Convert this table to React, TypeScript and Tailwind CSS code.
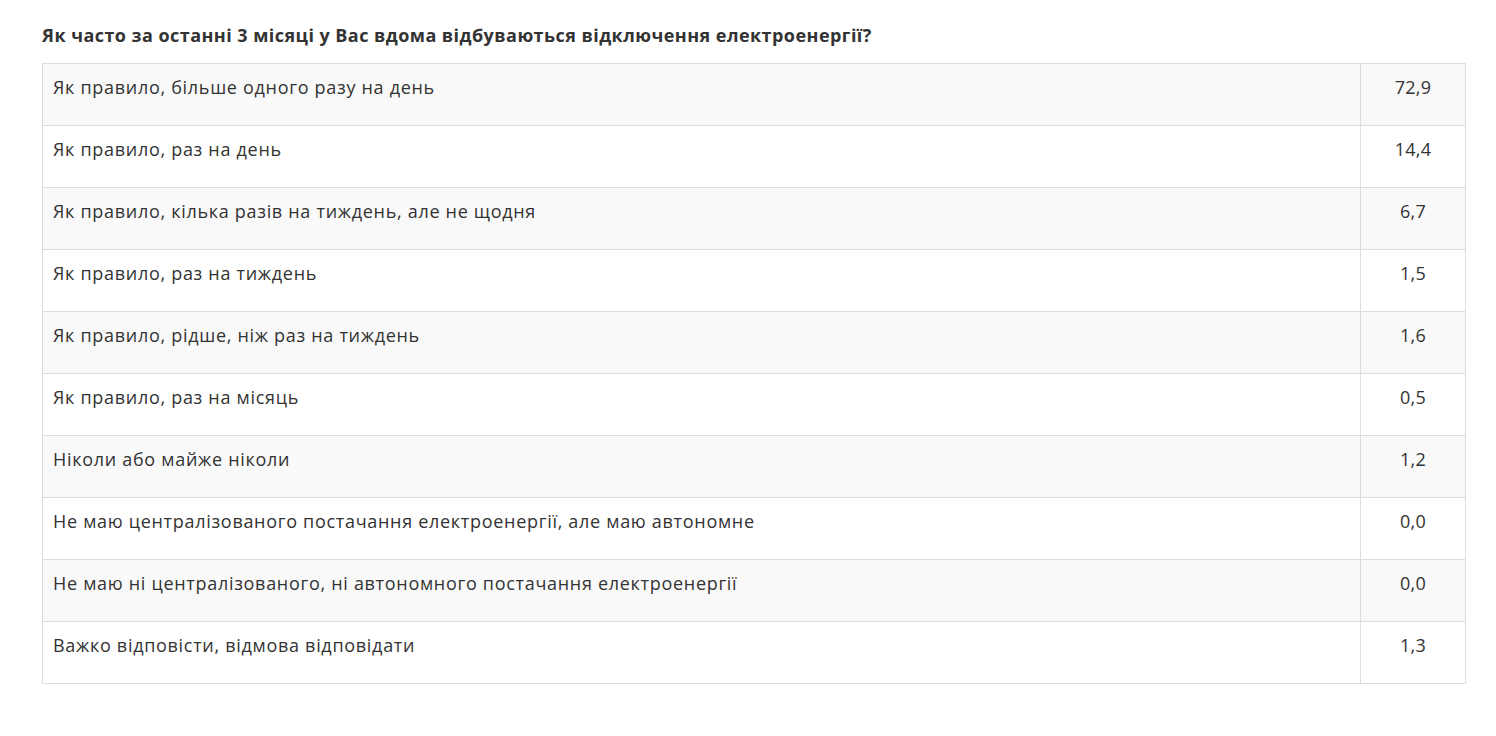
const rows: [string, string][] = [
  ["Як правило, більше одного разу на день", "72,9"],
  ["Як правило, раз на день", "14,4"],
  ["Як правило, кілька разів на тиждень, але не щодня", "6,7"],
  ["Як правило, раз на тиждень", "1,5"],
  ["Як правило, рідше, ніж раз на тиждень", "1,6"],
  ["Як правило, раз на місяць", "0,5"],
  ["Ніколи або майже ніколи", "1,2"],
  ["Не маю централізованого постачання електроенергії, але маю автономне", "0,0"],
  ["Не маю ні централізованого, ні автономного постачання електроенергії", "0,0"],
  ["Важко відповісти, відмова відповідати", "1,3"],
];

export default function App() {
  return (
    <div className="w-[1496px] h-[736px] bg-white text-[#333] px-[42px] pt-[22px]" style={{ fontFamily: "'Open Sans', 'Noto Sans', sans-serif" }}>
      <h3 className="text-[18px] font-bold leading-[26px] tracking-[0.45px] mb-[15px]">Як часто за останні 3 місяці у Вас вдома відбуваються відключення електроенергії?</h3>
      <table className="w-[1424px] border-collapse border border-[#ddd]">
        <tbody>
          {rows.map(([label, val], i) => (
            <tr key={i} className={i % 2 === 0 ? "bg-[#f9f9f9]" : "bg-white"}>
              <td className="h-[62px] align-top border border-[#ddd] px-[10px] pt-[10px] text-[18px] leading-[26px] tracking-[0.7px]">{label}</td>
              <td className="h-[62px] w-[105px] align-top border border-[#ddd] pt-[10px] text-center text-[18px] leading-[26px] tracking-[0.3px]">{val}</td>
            </tr>
          ))}
        </tbody>
      </table>
    </div>
  );
}
